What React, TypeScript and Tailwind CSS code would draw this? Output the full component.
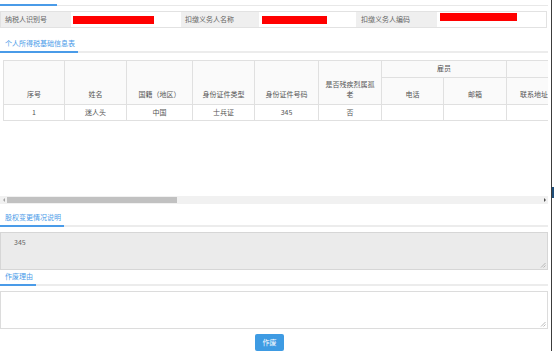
import React from 'react';

const font = { fontFamily: '"Noto Sans CJK SC", "Noto Sans", sans-serif' };

function SectionTitle({ title, bar, gapTop }: { title: string; bar: string; gapTop: string }) {
  return (
    <div className={gapTop}>
      <div className="h-[10px] leading-[10px] pl-[5px] text-[7px] text-[#4a9be8]">{title}</div>
      <div className="flex items-end mt-[3px]">
        <div className={`${bar} h-[2px] bg-[#4a9be8]`} />
        <div className="flex-1 h-[2px] bg-[#ececec]" />
      </div>
    </div>
  );
}

function Grip() {
  return (
    <svg width="6" height="6" viewBox="0 0 6 6" className="absolute right-[1px] bottom-[1px]">
      <path d="M5.5 1 L1 5.5 M5.5 3.5 L3.5 5.5" stroke="#a8a8a8" strokeWidth="0.8" />
    </svg>
  );
}

export default function App() {
  const cols = [61, 62, 66, 62, 64, 63, 62, 63, 63, 63, 63];
  const th = 'border border-[#e0e0e0] px-[4px] font-normal text-[7px] leading-[10px] text-[#555] align-bottom pb-[5px]';
  const td = 'border border-[#e0e0e0] text-center text-[7px] leading-[10px] text-[#555]';

  return (
    <div className="w-[554px] h-[351px] overflow-hidden bg-white flex" style={font}>
      <div className="w-[548px] flex flex-col">
        {/* top tab strip remains */}
        <div className="flex items-end mt-[4px]">
          <div className="w-[57px] h-[2px] bg-[#4a9be8]" />
          <div className="flex-1 h-[1px] bg-[#e8e8e8]" />
        </div>

        {/* taxpayer row */}
        <div className="mt-[5px] h-[17px] w-[547px] border border-[#e2e2e2] flex text-[7px] text-[#666]">
          <div className="w-[70px] bg-[#efefef] flex items-center pl-[4px]">纳税人识别号</div>
          <div className="w-[110px] flex items-center">
            <div className="ml-[2px] mt-[2px] w-[81px] h-[8px] bg-[#ff0000]" />
          </div>
          <div className="w-[78px] bg-[#efefef] flex items-center pl-[4px]">扣缴义务人名称</div>
          <div className="w-[97px] flex items-center">
            <div className="ml-[3px] mt-[1px] w-[65px] h-[8px] bg-[#ff0000]" />
          </div>
          <div className="w-[81px] bg-[#efefef] flex items-center pl-[5px]">扣缴义务人编码</div>
          <div className="flex-1 flex items-start">
            <div className="ml-[3px] mt-[1px] w-[77px] h-[8px] bg-[#ff0000]" />
          </div>
        </div>

        <SectionTitle title="个人所得税基础信息表" bar="w-[78px]" gapTop="mt-[10px]" />

        {/* table area */}
        <div className="mt-[7px] h-[141px] overflow-hidden pl-[3px]">
          <table className="table-fixed border-collapse" style={{ width: cols.reduce((a, b) => a + b, 0) }}>
            <colgroup>
              {cols.map((w, i) => (
                <col key={i} style={{ width: w }} />
              ))}
            </colgroup>
            <thead className="bg-[#fafafa]">
              <tr className="h-[17px]">
                <th rowSpan={2} className={th}>序号</th>
                <th rowSpan={2} className={th}>姓名</th>
                <th rowSpan={2} className={th}>国籍（地区）</th>
                <th rowSpan={2} className={th}>身份证件类型</th>
                <th rowSpan={2} className={th}>身份证件号码</th>
                <th rowSpan={2} className={th}>是否残疾烈属孤老</th>
                <th colSpan={2} className="border border-[#e0e0e0] font-normal text-[7px] text-[#555] align-middle">雇员</th>
                <th colSpan={3} className="border border-[#e0e0e0] font-normal text-[7px] text-[#555]" />
              </tr>
              <tr className="h-[27px]">
                <th className={th}>电话</th>
                <th className={th}>邮箱</th>
                <th className={`${th} text-left pl-[13px]`}>联系地址</th>
                <th className={th} />
                <th className={th} />
              </tr>
            </thead>
            <tbody>
              <tr className="h-[16px]">
                <td className={td}>1</td>
                <td className={td}>迷人头</td>
                <td className={td}>中国</td>
                <td className={td}>士兵证</td>
                <td className={td}>345</td>
                <td className={td}>否</td>
                <td className={td} />
                <td className={td} />
                <td className={td} />
                <td className={td} />
                <td className={td} />
              </tr>
            </tbody>
          </table>
        </div>

        {/* horizontal scrollbar */}
        <div className="h-[8px] bg-[#f1f1f1] flex items-center">
          <div className="w-[7px] flex justify-center">
            <div className="w-0 h-0 border-y-[2px] border-y-transparent border-r-[2px] border-r-[#a3a3a3]" />
          </div>
          <div className="w-[170px] h-[6px] bg-[#c1c1c1]" />
          <div className="flex-1" />
          <div className="w-[7px] flex justify-center">
            <div className="w-0 h-0 border-y-[2px] border-y-transparent border-l-[2px] border-l-[#505050]" />
          </div>
        </div>

        <SectionTitle title="股权变更情况说明" bar="w-[64px]" gapTop="mt-[8px]" />

        <div className="mt-[5px] h-[39px] relative border border-[#d6d6d6] bg-[#ebebeb] text-[7px] text-[#666] pl-[13px] pt-[4px] leading-[10px]">
          345
          <Grip />
        </div>

        <SectionTitle title="作废理由" bar="w-[36px]" gapTop="mt-[1px]" />

        <div className="mt-[5px] h-[39px] relative border border-[#dcdcdc] bg-white">
          <Grip />
        </div>

        <div className="mt-[5px] ml-[255px] w-[29px] h-[18px] rounded-[2px] bg-[#3e9be3] text-white text-[7px] flex items-center justify-center">
          作废
        </div>
      </div>

      <div className="w-[3px]" />
      <div className="w-[1px] bg-[#3c3c3c]" />
      <div className="w-[2px]">
        <div className="mt-[187px] h-[11px] bg-[#1f4e79]" />
      </div>
    </div>
  );
}
